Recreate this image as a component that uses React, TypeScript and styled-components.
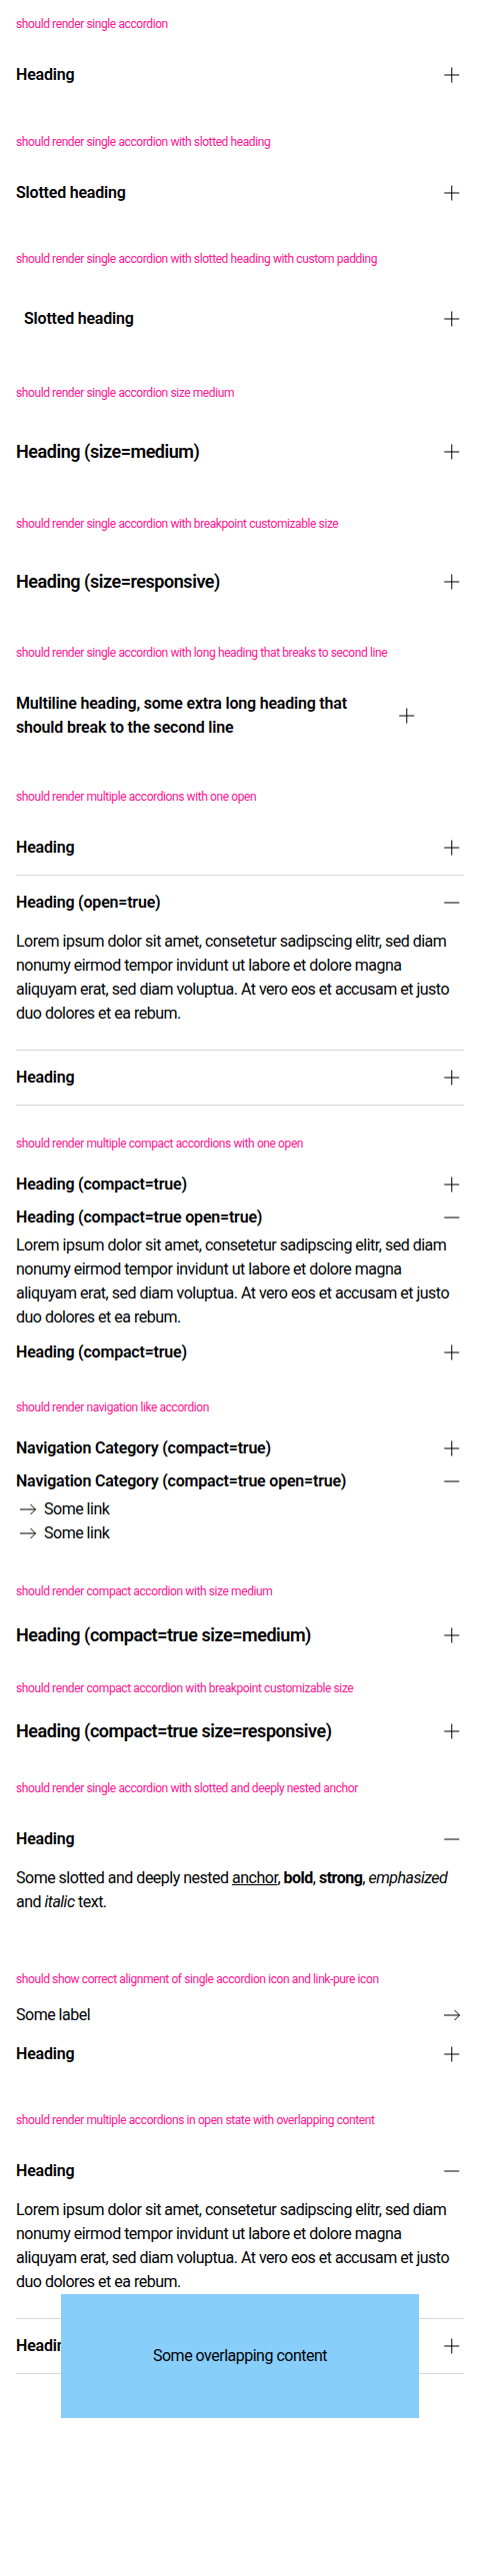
import React from "react";
import styled, { createGlobalStyle } from "styled-components";

const FONT = `"Roboto", "Liberation Sans", Arial, sans-serif`;
const INK = "#010205";
const PINK = "#ff1493";
const LINE = "#d8d8db";

type Size = "small" | "medium" | "responsive";

const GlobalStyle = createGlobalStyle`
  html, body { margin: 0; padding: 0; background: #fff; }
  body { font-family: ${FONT}; color: ${INK}; }
  * { box-sizing: border-box; }
`;

const Page = styled.main`
  padding: 15px 16px 0;
  min-height: 2577px;
`;

const Section = styled.section<{ $mt?: number }>`
  margin-top: ${(p) => p.$mt ?? 0}px;
  display: flex;
  flex-direction: column;
  gap: 15px;
`;

const Title = styled.p`
  margin: 0;
  font-size: 12px;
  line-height: 18px;
  font-weight: 400;
  letter-spacing: -0.4px;
  color: ${PINK};
`;

const Group = styled.div``;

const Item = styled.div<{ $divider?: boolean; $maxWidth?: number }>`
  position: relative;
  border-bottom: ${(p) => (p.$divider ? `1px solid ${LINE}` : "none")};
  max-width: ${(p) => (p.$maxWidth ? `${p.$maxWidth}px` : "none")};
`;

const sizeFont = { small: 16, medium: 18, responsive: 18 };
const sizeLine = { small: 24, medium: 30, responsive: 28 };
const sizeSpacing = { small: -0.2, medium: -0.45, responsive: -0.45 };

const HeadingRow = styled.div<{ $size: Size; $compact?: boolean }>`
  display: flex;
  align-items: center;
  justify-content: space-between;
  gap: 24px;
  padding: ${(p) => (p.$compact ? "5px 0 4px" : p.$size === "small" ? "15px 0" : "20px 0")};
  font-size: ${(p) => sizeFont[p.$size]}px;
  line-height: ${(p) => sizeLine[p.$size]}px;
  letter-spacing: ${(p) => sizeSpacing[p.$size]}px;
  font-weight: 600;
  color: ${INK};
`;

const HeadingText = styled.h2<{ $slotPad?: boolean }>`
  margin: 0;
  font: inherit;
  padding: ${(p) => (p.$slotPad ? "9px 8px" : "0")};
`;

const Content = styled.div<{ $compact?: boolean }>`
  padding: 0 0 ${(p) => (p.$compact ? 6 : 24)}px;
  font-size: 16px;
  line-height: 24px;
  font-weight: 400;
  letter-spacing: -0.5px;
  color: ${INK};
`;

const Paragraph = styled.p`
  margin: 0;
`;

const Anchor = styled.a`
  color: inherit;
  text-decoration: underline;
`;

const Strong = styled.b`
  font-weight: 700;
`;

const IconSvg = styled.svg`
  flex: 0 0 24px;
  width: 24px;
  height: 24px;
  display: block;
`;

const LinkList = styled.div`
  display: flex;
  flex-direction: column;
`;

const NavLink = styled.a`
  display: flex;
  align-items: center;
  gap: 4px;
  color: ${INK};
  text-decoration: none;
  font-size: 16px;
  line-height: 24px;
  letter-spacing: -0.5px;
`;

const LinkPure = styled.a`
  display: flex;
  align-items: center;
  justify-content: space-between;
  color: ${INK};
  text-decoration: none;
  font-size: 16px;
  line-height: 24px;
  letter-spacing: -0.5px;
`;

const Overlap = styled.div`
  position: absolute;
  left: 10%;
  width: 80%;
  height: 124px;
  z-index: 1;
  display: flex;
  align-items: center;
  justify-content: center;
  background: #87cefa;
  font-size: 16px;
  line-height: 24px;
  letter-spacing: -0.5px;
  color: ${INK};
`;

const Plus = () => (
  <IconSvg viewBox="0 0 24 24" fill="none" stroke={INK} strokeWidth={1}>
    <path d="M4.25 12h15M11.75 4.5v15" />
  </IconSvg>
);

const Minus = () => (
  <IconSvg viewBox="0 0 24 24" fill="none" stroke={INK} strokeWidth={1}>
    <path d="M4.25 12h15" />
  </IconSvg>
);

const Arrow = () => (
  <IconSvg viewBox="0 0 24 24" fill="none" stroke={INK} strokeWidth={1}>
    <path d="M4 12h15.5M14.5 7l5 5-5 5" />
  </IconSvg>
);

const LOREM =
  "Lorem ipsum dolor sit amet, consetetur sadipscing elitr, sed diam nonumy eirmod tempor invidunt ut labore et dolore magna aliquyam erat, sed diam voluptua. At vero eos et accusam et justo duo dolores et ea rebum.";

type AccProps = {
  heading: React.ReactNode;
  open?: boolean;
  compact?: boolean;
  size?: Size;
  divider?: boolean;
  slotPad?: boolean;
  maxWidth?: number;
  children?: React.ReactNode;
};

const Accordion = ({ heading, open, compact, size = "small", divider, slotPad, maxWidth, children }: AccProps) => (
  <Item $divider={divider} $maxWidth={maxWidth}>
    <HeadingRow $size={size} $compact={compact}>
      <HeadingText $slotPad={slotPad}>{heading}</HeadingText>
      {open ? <Minus /> : <Plus />}
    </HeadingRow>
    {open && <Content $compact={compact}>{children}</Content>}
  </Item>
);

export default function App() {
  return (
    <>
      <GlobalStyle />
      <Page>
        <Section>
          <Title>should render single accordion</Title>
          <Accordion heading="Heading" />
        </Section>

        <Section $mt={31}>
          <Title>should render single accordion with slotted heading</Title>
          <Accordion heading="Slotted heading" />
        </Section>

        <Section $mt={30}>
          <Title>should render single accordion with slotted heading with custom padding</Title>
          <Accordion heading="Slotted heading" slotPad />
        </Section>

        <Section $mt={29}>
          <Title>should render single accordion size medium</Title>
          <Accordion heading="Heading (size=medium)" size="medium" />
        </Section>

        <Section $mt={28}>
          <Title>should render single accordion with breakpoint customizable size</Title>
          <Accordion heading="Heading (size=responsive)" size="responsive" />
        </Section>

        <Section $mt={28}>
          <Title>should render single accordion with long heading that breaks to second line</Title>
          <Accordion heading="Multiline heading, some extra long heading that should break to the second line" maxWidth={403} />
        </Section>

        <Section $mt={33}>
          <Title>should render multiple accordions with one open</Title>
          <Group>
            <Accordion heading="Heading" divider />
            <Accordion heading="Heading (open=true)" divider open>
              <Paragraph>{LOREM}</Paragraph>
            </Accordion>
            <Accordion heading="Heading" divider />
          </Group>
        </Section>

        <Section $mt={29}>
          <Title>should render multiple compact accordions with one open</Title>
          <Group>
            <Accordion heading="Heading (compact=true)" compact />
            <Accordion heading="Heading (compact=true open=true)" compact open>
              <Paragraph>{LOREM}</Paragraph>
            </Accordion>
            <Accordion heading="Heading (compact=true)" compact />
          </Group>
        </Section>

        <Section $mt={30}>
          <Title>should render navigation like accordion</Title>
          <Group>
            <Accordion heading="Navigation Category (compact=true)" compact />
            <Accordion heading="Navigation Category (compact=true open=true)" compact open>
              <LinkList>
                <NavLink href="#">
                  <Arrow />
                  Some link
                </NavLink>
                <NavLink href="#">
                  <Arrow />
                  Some link
                </NavLink>
              </LinkList>
            </Accordion>
          </Group>
        </Section>

        <Section $mt={31}>
          <Title>should render compact accordion with size medium</Title>
          <Accordion heading="Heading (compact=true size=medium)" size="medium" compact />
        </Section>

        <Section $mt={25}>
          <Title>should render compact accordion with breakpoint customizable size</Title>
          <Accordion heading="Heading (compact=true size=responsive)" size="responsive" compact />
        </Section>

        <Section $mt={30}>
          <Title>should render single accordion with slotted and deeply nested anchor</Title>
          <Accordion heading="Heading" open>
            <Paragraph>
              Some slotted and deeply nested <Anchor href="#">anchor</Anchor>, <Strong>bold</Strong>,{" "}
              <strong>strong</strong>, <em>emphasized</em> and <i>italic</i> text.
            </Paragraph>
          </Accordion>
        </Section>

        <Section $mt={32}>
          <Title>should show correct alignment of single accordion icon and link-pure icon</Title>
          <Group>
            <LinkPure href="#">
              Some label
              <Arrow />
            </LinkPure>
            <Accordion heading="Heading" />
          </Group>
        </Section>

        <Section $mt={30}>
          <Title>should render multiple accordions in open state with overlapping content</Title>
          <Group>
            <Accordion heading="Heading" divider open>
              <Paragraph>{LOREM}</Paragraph>
              <Overlap>Some overlapping content</Overlap>
            </Accordion>
            <Accordion heading="Heading" divider />
          </Group>
        </Section>
      </Page>
    </>
  );
}
